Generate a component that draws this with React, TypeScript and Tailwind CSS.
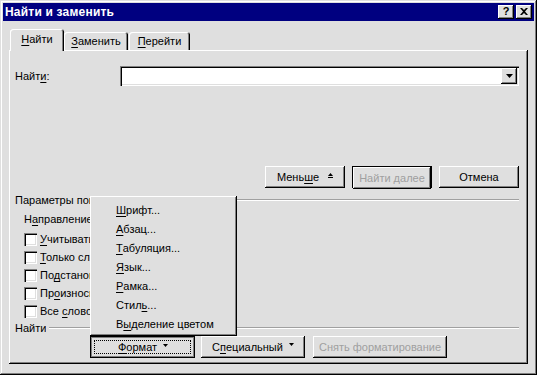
import type { ReactNode } from "react";

const font = "font-['Liberation_Sans',Arial,sans-serif]";
const frame = "shadow-[inset_-1px_-1px_#000,inset_1px_1px_#dfdfdf,inset_-2px_-2px_#808080,inset_2px_2px_#fff]";
const raised = "shadow-[inset_-1px_-1px_#000,inset_1px_1px_#fff,inset_-2px_-2px_#808080,inset_2px_2px_#dfdfdf]";
const sunken = "shadow-[inset_1px_1px_#808080,inset_2px_2px_#000,inset_-1px_-1px_#fff,inset_-2px_-2px_#dfdfdf]";

function U({ children }: { children: ReactNode }) {
  return <span className="underline underline-offset-[2px] decoration-1">{children}</span>;
}

function SmallArrow() {
  return (
    <svg width="5" height="3" viewBox="0 0 5 3" className="ml-[6px] mb-[5px]">
      <path d="M0 0h5L2.5 3z" fill="#000" />
    </svg>
  );
}

function Button({ children, className = "", disabled = false }: { children: ReactNode; className?: string; disabled?: boolean }) {
  return (
    <div className={`h-[22px] flex items-center justify-center bg-[#dfdfdf] ${raised} ${disabled ? "text-[#a0a0a0]" : "text-black"} ${className}`}>
      {children}
    </div>
  );
}

// labels run under the popup menu, so they are clipped at its left edge
function Checkbox({ children }: { children: ReactNode }) {
  return (
    <div className="flex items-center h-[13px] pl-[15px]">
      <div className={`w-[13px] h-[13px] bg-white ${sunken}`} />
      <span className="ml-[3px] w-[50px] overflow-hidden whitespace-nowrap leading-[13px]">{children}</span>
    </div>
  );
}

function GroupHeader({ children, className = "", clip = "" }: { children: ReactNode; className?: string; clip?: string }) {
  return (
    <div className={`flex h-[13px] pl-[6px] pr-[9px] ${className}`}>
      <span className={`whitespace-nowrap leading-[13px] overflow-hidden ${clip}`}>{children}</span>
      <div className="flex-1 ml-[3px] mt-[5px] h-[2px] border-t border-[#a0a0a0] border-b border-b-white" />
    </div>
  );
}

export default function App() {
  const menuItems: ReactNode[] = [
    <><U>Ш</U>рифт...</>,
    <><U>А</U>бзац...</>,
    <><U>Т</U>абуляция...</>,
    <><U>Я</U>зык...</>,
    <><U>Р</U>амка...</>,
    <>Стил<U>ь</U>...</>,
    <>В<U>ы</U>деление цветом</>,
  ];

  return (
    <div className={`relative w-[537px] h-[375px] overflow-hidden bg-[#dfdfdf] ${frame} ${font} text-[11px] leading-none text-black flex flex-col`}>
      {/* Title bar */}
      <div className="mx-[3px] mt-[3px] h-[18px] bg-[#000080] flex items-center pl-[2px] pr-[2px]">
        <span className="text-white font-bold text-[12px] tracking-[0.2px]">Найти и заменить</span>
        <div className="ml-auto flex gap-[2px]">
          <div className={`w-[16px] h-[14px] bg-[#dfdfdf] ${raised} flex items-center justify-center font-bold text-[11px] pb-[1px]`}>?</div>
          <div className={`w-[16px] h-[14px] bg-[#dfdfdf] ${raised} flex items-center justify-center pb-[1px]`}>
            <svg width="8" height="7" viewBox="0 0 8 7">
              <path d="M0 0h2l2 2 2-2h2L5 3.5 8 7H6L4 5 2 7H0l3-3.5z" fill="#000" />
            </svg>
          </div>
        </div>
      </div>

      <div className="mx-[9px] mt-[8px]">
        {/* Tabs */}
        <div className="flex items-end h-[21px]">
          <div className="relative z-10 ml-[1px] -mb-[1px] w-[54px] h-[22px] bg-[#dfdfdf] rounded-t-[3px] shadow-[inset_1px_1px_#fff,inset_-1px_0_#000,inset_-2px_0_#808080] flex items-center justify-center pb-[2px]">
            <span><U>Н</U>айти</span>
          </div>
          <div className="w-[64px] h-[18px] rounded-t-[3px] shadow-[inset_1px_1px_#fff,inset_-1px_0_#000,inset_-2px_0_#808080] flex items-center justify-center">
            <span><U>З</U>аменить</span>
          </div>
          <div className="ml-[1px] w-[61px] h-[18px] rounded-t-[3px] shadow-[inset_1px_1px_#fff,inset_-1px_0_#000,inset_-2px_0_#808080] flex items-center justify-center">
            <span><U>П</U>ерейти</span>
          </div>
        </div>

        {/* Panel */}
        <div className="h-[314px] shadow-[inset_-1px_-1px_#000,inset_1px_1px_#fff,inset_-2px_-2px_#808080] flex flex-col">
          {/* Find row */}
          <div className="mt-[16px] h-[20px] flex items-center pl-[6px]">
            <span className="w-[105px]">Найт<U>и</U>:</span>
            <div className={`w-[399px] h-[20px] bg-white ${sunken} flex justify-end items-start pt-[2px] pr-[2px]`}>
              <div className={`w-[16px] h-[16px] bg-[#dfdfdf] ${raised} flex items-center justify-center`}>
                <svg width="7" height="4" viewBox="0 0 7 4">
                  <path d="M0 0h7L3.5 4z" fill="#000" />
                </svg>
              </div>
            </div>
          </div>

          {/* Action buttons */}
          <div className="mt-[80px] flex justify-end pr-[9px] gap-[7px]">
            <Button className="w-[80px]">
              <span>Мень<U>ш</U>е</span>
              <svg width="5" height="6" viewBox="0 0 5 6" className="ml-[9px] mb-[2px]">
                <path d="M2.5 0L5 3H0z" fill="#000" />
                <rect x="0" y="4" width="5" height="1" fill="#000" />
              </svg>
            </Button>
            <div className="w-[80px] h-[22px] border border-black">
              <Button className="w-full h-[20px] text-[#a0a0a0]" disabled>
                <span>Найти далее</span>
              </Button>
            </div>
            <Button className="w-[80px]">
              <span>Отмена</span>
            </Button>
          </div>

          <GroupHeader className="mt-[6px]" clip="max-w-[75px]">Параметры поиска</GroupHeader>

          <div className="mt-[6px] h-[13px] pl-[15px] leading-[13px] w-[81px] overflow-hidden whitespace-nowrap">
            Н<U>а</U>правление:
          </div>

          <div className="mt-[7px] flex flex-col gap-[5px]">
            <Checkbox><U>У</U>читывать регистр</Checkbox>
            <Checkbox><U>Т</U>олько слово целиком</Checkbox>
            <Checkbox>По<U>д</U>становочные знаки</Checkbox>
            <Checkbox>Пр<U>о</U>износится как</Checkbox>
            <Checkbox>Все <U>с</U>ловоформы</Checkbox>
          </div>

          <GroupHeader className="mt-[4px]">Найти</GroupHeader>

          {/* Format buttons */}
          <div className="mt-[1px] flex pl-[81px]">
            <div className="w-[105px] h-[22px] border border-black shadow-[inset_1px_1px_#808080,inset_-1px_-1px_#808080] flex items-center justify-center p-[3px]">
              <div className="w-full h-full border border-dotted border-black flex items-center justify-center pt-[1px] pl-[1px]">
                <span><U>Ф</U>ормат</span>
                <SmallArrow />
              </div>
            </div>
            <Button className="ml-[6px] w-[104px]">
              <span>С<U>п</U>ециальный</span>
              <SmallArrow />
            </Button>
            <Button className="ml-[8px] w-[134px]" disabled>
              <span>Снять форматирование</span>
            </Button>
          </div>
        </div>
      </div>

      {/* Popup menu */}
      <div className={`absolute left-[90px] top-[196px] w-[147px] h-[140px] bg-[#dfdfdf] ${raised} pt-[5px] px-[2px]`}>
        {menuItems.map((item, i) => (
          <div key={i} className="h-[19px] flex items-center pl-[24px] whitespace-nowrap">
            {item}
          </div>
        ))}
      </div>
    </div>
  );
}
